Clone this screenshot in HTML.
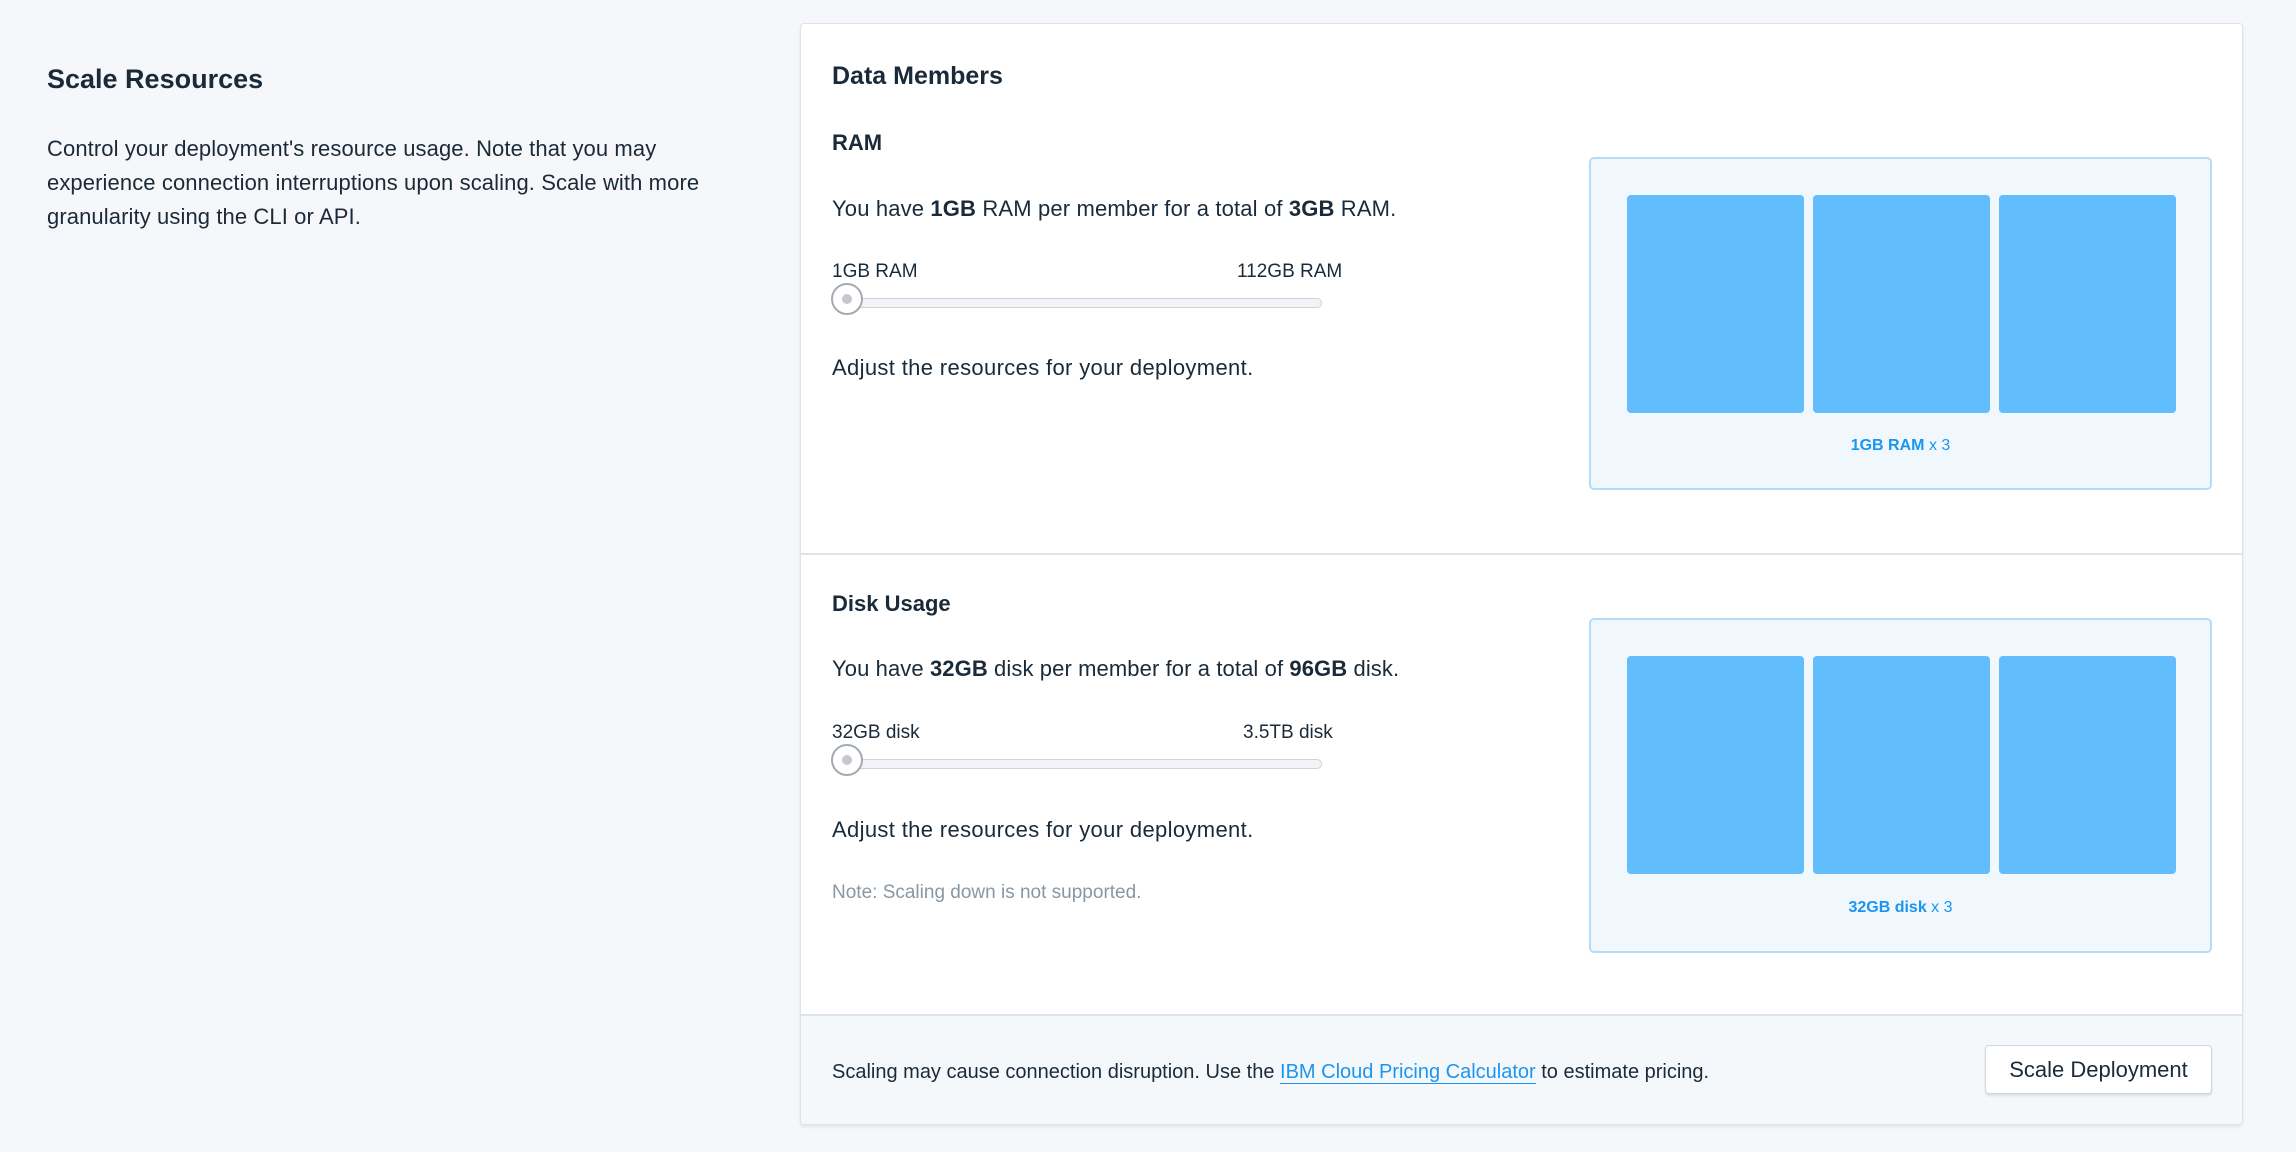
<!DOCTYPE html>
<html><head><meta charset="utf-8"><style>
*{margin:0;padding:0;box-sizing:border-box}
body{width:2296px;height:1152px;background:#f5f7fa;font-family:"Liberation Sans",sans-serif;color:#1b2a38;position:relative;overflow:hidden}
.a{position:absolute;white-space:nowrap;line-height:34px}
.card{position:absolute;left:800px;top:23px;width:1443px;height:1102px;background:#fff;border:1px solid #dfe3e8;border-radius:4px;box-shadow:0 2px 3px rgba(0,0,0,.08)}
.hr{position:absolute;left:800px;width:1443px;height:2px;background:#dfe3e8}
.box{position:absolute;left:1589px;width:623px;background:#f0f7fd;border:2px solid #b4dcfa;border-radius:5px}
.blk{position:absolute;width:177px;height:218px;background:#61bdfc;border-radius:4px}
.lbl{position:absolute;width:623px;text-align:center;font-size:16px;color:#1a96f0;font-weight:bold;left:1589px;line-height:20px}
.lbl span{font-weight:normal}
.track{position:absolute;left:832px;width:490px;height:10px;background:#f3f4f7;border:1px solid #d0d3d8;border-radius:5px}
.thumb{position:absolute;width:32px;height:32px;border-radius:50%;background:#fff;border:2px solid #a6aab0}
.thumb:after{content:"";position:absolute;left:9px;top:9px;width:10px;height:10px;border-radius:50%;background:#c5c8cc}
.f22{font-size:22px}.f19{font-size:19px}
</style></head><body>
<div class="a" style="left:47px;top:62px;font-size:27px;font-weight:bold;color:#1b2a38">Scale Resources</div>
<div class="a f22" style="left:47px;top:132px;line-height:34px;letter-spacing:0.1px">Control your deployment's resource usage. Note that you may<br>experience connection interruptions upon scaling. Scale with more<br>granularity using the CLI or API.</div>

<div class="card"></div>
<div class="hr" style="top:553px"></div>
<div style="position:absolute;left:801px;top:1016px;width:1441px;height:108px;background:#f5f8fa;border-radius:0 0 4px 4px"></div>
<div class="hr" style="top:1014px"></div>

<div class="a" style="left:832px;top:59px;font-size:25px;font-weight:bold">Data Members</div>
<div class="a f22" style="left:832px;top:126px;font-weight:bold">RAM</div>
<div class="a f22" style="left:832px;top:192px;letter-spacing:0.15px">You have <b>1GB</b> RAM per member for a total of <b>3GB</b> RAM.</div>
<div class="a f19" style="left:832px;top:255px">1GB RAM</div>
<div class="a f19" style="left:1237px;top:255px">112GB RAM</div>
<div class="track" style="top:298px"></div>
<div class="thumb" style="left:831px;top:283px"></div>
<div class="a f22" style="left:832px;top:351px;letter-spacing:0.35px">Adjust the resources for your deployment.</div>

<div class="box" style="top:157px;height:333px"></div>
<div class="blk" style="left:1627px;top:195px"></div>
<div class="blk" style="left:1813px;top:195px"></div>
<div class="blk" style="left:1999px;top:195px"></div>
<div class="lbl" style="top:436px">1GB RAM <span>x 3</span></div>

<div class="a f22" style="left:832px;top:587px;font-weight:bold">Disk Usage</div>
<div class="a f22" style="left:832px;top:652px;letter-spacing:0.1px">You have <b>32GB</b> disk per member for a total of <b>96GB</b> disk.</div>
<div class="a f19" style="left:832px;top:716px">32GB disk</div>
<div class="a f19" style="left:1243px;top:716px">3.5TB disk</div>
<div class="track" style="top:759px"></div>
<div class="thumb" style="left:831px;top:744px"></div>
<div class="a f22" style="left:832px;top:813px;letter-spacing:0.35px">Adjust the resources for your deployment.</div>
<div class="a" style="left:832px;top:876px;font-size:19px;color:#8a97a3">Note: Scaling down is not supported.</div>

<div class="box" style="top:618px;height:335px"></div>
<div class="blk" style="left:1627px;top:656px"></div>
<div class="blk" style="left:1813px;top:656px"></div>
<div class="blk" style="left:1999px;top:656px"></div>
<div class="lbl" style="top:898px">32GB disk <span>x 3</span></div>

<div class="a" style="left:832px;top:1055px;font-size:20px">Scaling may cause connection disruption. Use the <span style="color:#1a96f0;border-bottom:1px solid #1a96f0">IBM Cloud Pricing Calculator</span> to estimate pricing.</div>
<div style="position:absolute;left:1985px;top:1045px;width:227px;height:49px;background:#fff;border:1px solid #d3d7db;border-radius:4px;box-shadow:0 2px 2px rgba(0,0,0,.1);font-size:22px;line-height:47px;text-align:center;color:#1b2a38">Scale Deployment</div>
</body></html>
